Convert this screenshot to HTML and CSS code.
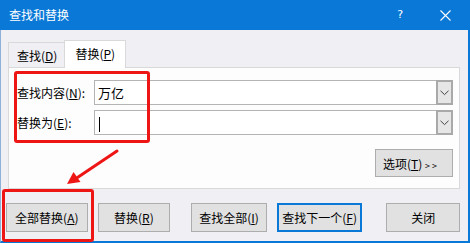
FILE: index.html
```
<!DOCTYPE html>
<html lang="zh-CN">
<head>
    <meta charset="UTF-8">
    <meta name="viewport" content="width=device-width, initial-scale=1.0">
    <title>查找和替换</title>

    <link rel="stylesheet" href="styles.css">
</head>
<body>
    <div class="window">
        <div class="titlebar">
            <span class="title">查找和替换</span>
            <span class="help">?</span>
            <span class="close">
                <svg width="11" height="11" viewBox="0 0 11 11"><path d="M0.5 0.5 L10.5 10.5 M10.5 0.5 L0.5 10.5" stroke="#fff" stroke-width="1.1" fill="none"/></svg>
            </span>
        </div>

        <div class="content">
            <div class="tabs">
                <div class="tab">查找(<u>D</u>)</div>
                <div class="tab active">替换(<u>P</u>)</div>
            </div>

            <div class="panel">
                <div class="row">
                    <label class="label">查找内容(<u>N</u>):</label>
                    <div class="combo">
                        <span class="value">万亿</span>
                        <span class="drop">
                            <svg width="9" height="6" viewBox="0 0 9 6"><path d="M0.5 0.8 L4.5 4.6 L8.5 0.8" stroke="#444" stroke-width="1" fill="none"/></svg>
                        </span>
                    </div>
                </div>

                <div class="row">
                    <label class="label">替换为(<u>E</u>):</label>
                    <div class="combo">
                        <span class="value"><span class="caret"></span></span>
                        <span class="drop">
                            <svg width="9" height="6" viewBox="0 0 9 6"><path d="M0.5 0.8 L4.5 4.6 L8.5 0.8" stroke="#444" stroke-width="1" fill="none"/></svg>
                        </span>
                    </div>
                </div>

                <div class="options-row">
                    <button class="btn btn-options">选项(<u>T</u>) <span class="more">&gt;&gt;</span></button>
                </div>
            </div>

            <div class="buttons">
                <button class="btn btn-all">全部替换(<u>A</u>)</button>
                <button class="btn btn-replace">替换(<u>R</u>)</button>
                <button class="btn btn-findall">查找全部(<u>I</u>)</button>
                <button class="btn btn-next">查找下一个(<u>F</u>)</button>
                <button class="btn btn-close">关闭</button>
            </div>
        </div>

        <div class="mark mark-fields"></div>
        <div class="mark mark-button"></div>
        <svg class="arrow" width="470" height="243" viewBox="0 0 470 243">
            <line x1="117" y1="151" x2="76" y2="178.5" stroke="#ee1515" stroke-width="3" stroke-linecap="round"/>
            <polygon points="67,184 80.5,182 73.5,172" fill="#ee1515"/>
        </svg>
    </div>
</body>
</html>
```

FILE: styles.css
```
* {
    margin: 0;
    padding: 0;
    box-sizing: border-box;
}


html, body {
    width: 470px;
    height: 243px;
    overflow: hidden;
}

body {
    font-family: "Noto Sans CJK SC", "Noto Sans", sans-serif;
    font-size: 12px;
    color: #000;
    background: #f0eff4;
}

u {
    text-decoration: underline;
    text-underline-offset: 1px;
}


.window {
    position: relative;
    width: 470px;
    height: 243px;
}


.titlebar {
    display: flex;
    align-items: center;
    height: 30px;
    padding-left: 9px;
    background: #0a78d6;
    color: #fff;
}

.titlebar .title {
    font-size: 12px;
    line-height: 14px;
}

.titlebar .help {
    margin-left: auto;
    font-family: "DejaVu Sans", sans-serif;
    font-size: 11px;
    line-height: 12px;
}

.titlebar .close {
    display: flex;
    margin-left: 37px;
    margin-right: 19px;
}


.content {
    height: 213px;
    padding: 10px 8px 0 7px;
    border-left: 1px solid #8db1d9;
    border-right: 2px solid #0a78d6;
    border-bottom: 2px solid #0a78d6;
}


.tabs {
    display: flex;
    align-items: flex-end;
    height: 27px;
}

.tabs .tab {
    height: 25px;
    padding: 0 7px 0 8px;
    border: 1px solid #d9d9d9;
    border-bottom: none;
    background: #f0eff4;
    line-height: 26px;
}

.tabs .tab.active {
    position: relative;
    z-index: 1;
    height: 28px;
    margin-bottom: -1px;
    margin-left: -1px;
    padding: 0 10px 0 10px;
    background: #fff;
    line-height: 26px;
}


.panel {
    height: 122px;
    padding: 12px 6px 0 8px;
    border: 1px solid #d9d9d9;
    background: #fdfdfd;
}

.panel .row {
    display: flex;
    align-items: center;
    height: 25px;
    margin-bottom: 5px;
}

.panel .row .label {
    width: 77px;
    line-height: 14px;
}

.panel .combo {
    display: flex;
    width: 359px;
    height: 25px;
    border: 1px solid #b4b4b4;
    background: #fff;
}

.panel .combo .value {
    flex: 1;
    display: flex;
    align-items: center;
    padding-left: 3px;
    font-size: 13px;
}

.panel .combo .caret {
    display: block;
    width: 1px;
    height: 15px;
    margin-left: 1px;
    margin-top: 3px;
    background: #000;
}

.panel .combo .drop {
    display: flex;
    align-items: center;
    justify-content: center;
    width: 17px;
    margin: -1px -1px -1px 0;
    border: 2px solid #a9a9a9;
    background: #e6e6e6;
}


.panel .options-row {
    display: flex;
    justify-content: flex-end;
    margin-top: 14px;
}


.btn {
    height: 29px;
    border: 1px solid #adadad;
    background: #e1e1e1;
    font-family: "Noto Sans CJK SC", "Noto Sans", sans-serif;
    font-size: 12px;
    color: #000;
}

.btn-options {
    width: 78px;
    height: 28px;
    text-align: left;
    padding-left: 7px;
}

.btn-options .more {
    font-size: 9px;
    letter-spacing: 2px;
}


.buttons {
    display: flex;
    margin-top: 14px;
    margin-left: -2px;
}

.btn-all {
    width: 82px;
}

.btn-replace {
    width: 73px;
    margin-left: 10px;
}

.btn-findall {
    width: 76px;
    margin-left: 21px;
}

.btn-next {
    width: 86px;
    margin-left: 10px;
    border: 2px solid #0a78d6;
}

.btn-close {
    width: 74px;
    margin-left: 24px;
}


.mark {
    position: absolute;
    border: 3px solid #ee1515;
    border-radius: 3px;
}

.mark-fields {
    left: 14px;
    top: 71px;
    width: 136px;
    height: 72px;
}

.mark-button {
    left: 2px;
    top: 189px;
    width: 92px;
    height: 53px;
}

.arrow {
    position: absolute;
    left: 0;
    top: 0;
    pointer-events: none;
}
```
